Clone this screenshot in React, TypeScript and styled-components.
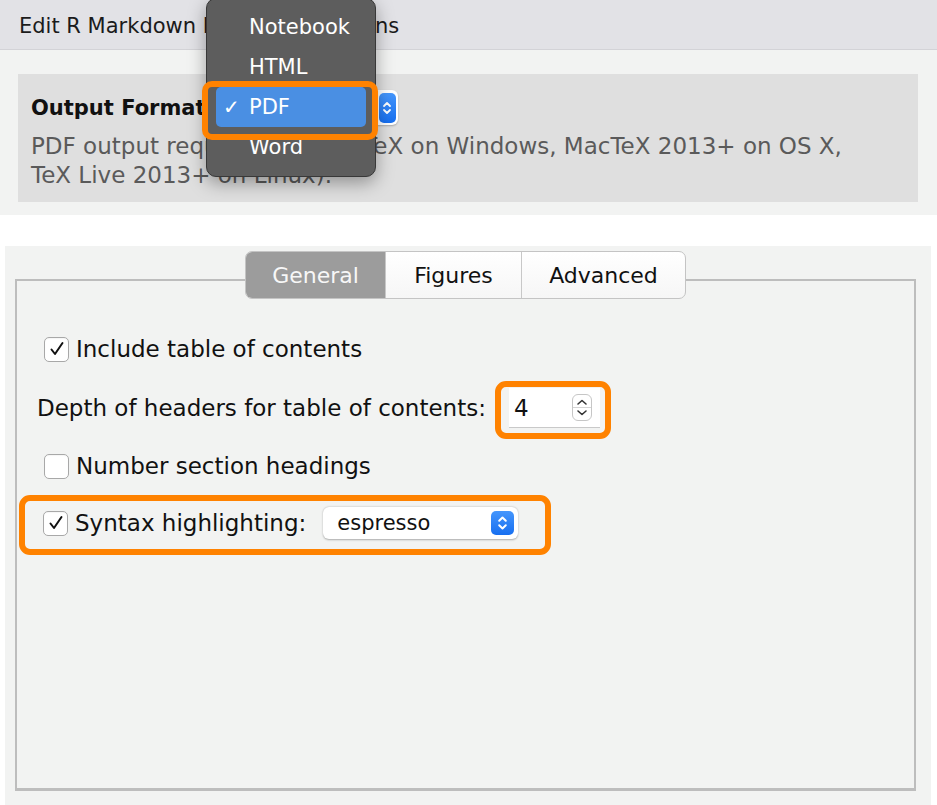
import React from "react";
import styled, { createGlobalStyle } from "styled-components";

const GlobalStyle = createGlobalStyle`
  html, body { margin: 0; padding: 0; background: #ffffff; }
  body { font-family: "DejaVu Sans", "Lucida Grande", sans-serif; }
  * { box-sizing: border-box; }
`;

const ORANGE = "#ff8200";

const Stage = styled.div`
  position: relative;
  width: 937px;
  height: 805px;
  overflow: hidden;
  background: #ffffff;
  display: flex;
  flex-direction: column;
`;

const TitleBar = styled.div`
  height: 50px;
  flex: none;
  display: flex;
  align-items: center;
  padding: 3px 0 0 19px;
  background: #e2e2e6;
  border-bottom: 1px solid #d3d3d7;
  font-size: 21px;
  color: #1b1b1b;
  white-space: nowrap;
`;

const TopSection = styled.div`
  height: 165px;
  flex: none;
  background: #f2f3f2;
  padding: 24px 19px 0 18px;
`;

const OutputBox = styled.div`
  height: 128px;
  background: #dfdfdf;
  padding: 16px 13px 0 13px;
`;

const FormatRow = styled.div`
  display: flex;
  align-items: center;
  height: 35px;
`;

const FormatLabel = styled.span`
  font-size: 21px;
  font-weight: bold;
  color: #111;
`;

const FormatSelect = styled.div`
  margin-left: 12px;
  width: 172px;
  height: 35px;
  flex: none;
  display: flex;
  align-items: center;
  justify-content: space-between;
  padding: 0 2px 0 12px;
  background: #ffffff;
  border-radius: 6px;
  box-shadow: 0 1px 2px rgba(0, 0, 0, 0.25);
  font-size: 21px;
  color: #111;
`;

const Description = styled.div`
  margin-top: 7px;
  font-size: 23px;
  line-height: 29px;
  color: #5a5a5a;
  white-space: nowrap;
`;

const LowerPanel = styled.div`
  flex: 1;
  margin: 31px 6px 0 5px;
  background: #f2f3f2;
  padding: 5px 15px 14px 10px;
  display: flex;
  flex-direction: column;
`;

const TabStrip = styled.div`
  position: relative;
  z-index: 1;
  align-self: center;
  display: flex;
  height: 48px;
  border: 1.5px solid #c4c4c4;
  border-radius: 7px;
  overflow: hidden;
  background: linear-gradient(#ffffff, #f6f6f6);
`;

const Tab = styled.div<{ $active?: boolean; $w: number }>`
  width: ${(p) => p.$w}px;
  display: flex;
  align-items: center;
  justify-content: center;
  font-size: 22px;
  color: ${(p) => (p.$active ? "#f7f7f7" : "#111")};
  background: ${(p) => (p.$active ? "#9c9c9c" : "transparent")};
  & + & {
    border-left: 1.5px solid #c8c8c8;
  }
`;

const Pane = styled.div`
  flex: 1;
  margin-top: -20px;
  border: 2px solid #bdbdbd;
  border-bottom-width: 3px;
  padding: 54px 0 0 0;
  display: flex;
  flex-direction: column;
  align-items: flex-start;
`;

const Row = styled.div<{ $indent: number; $mt?: number }>`
  display: flex;
  align-items: center;
  margin-left: ${(p) => p.$indent}px;
  margin-top: ${(p) => p.$mt ?? 0}px;
`;

const TopRow = styled(Row)`
  align-items: flex-start;
`;

const Box = styled.div`
  width: 25px;
  height: 25px;
  flex: none;
  border: 1px solid #a8a8a8;
  border-radius: 5px;
  background: #ffffff;
  box-shadow: inset 0 1px 1px rgba(0, 0, 0, 0.04);
  display: flex;
  align-items: center;
  justify-content: center;
`;

const Label = styled.span<{ $gap?: number; $mt?: number }>`
  font-size: 23px;
  line-height: 28px;
  color: #111;
  white-space: nowrap;
  margin-left: ${(p) => p.$gap ?? 0}px;
  margin-top: ${(p) => p.$mt ?? 0}px;
`;

const Highlight = styled.div<{ $pad: string; $ml?: number }>`
  display: flex;
  align-items: center;
  margin-left: ${(p) => p.$ml ?? 0}px;
  border: 6px solid ${ORANGE};
  border-radius: 11px;
  padding: ${(p) => p.$pad};
`;

const NumberField = styled.div`
  width: 91px;
  height: 40px;
  display: flex;
  align-items: center;
  padding-left: 5px;
  background: #ffffff;
  border-bottom: 1.5px solid #c9c9c9;
  font-size: 23px;
  color: #111;
`;

const Stepper = styled.div`
  margin-left: auto;
  margin-right: 8px;
  width: 20px;
  height: 27px;
  border: 1px solid #c6c6c6;
  border-radius: 6px;
  background: #ffffff;
  display: flex;
  align-items: center;
  justify-content: center;
`;

const SyntaxSelect = styled.div`
  margin-left: 17px;
  width: 195px;
  height: 32px;
  display: flex;
  align-items: center;
  justify-content: space-between;
  padding: 0 4px 0 14px;
  background: #ffffff;
  border-radius: 6px;
  box-shadow: 0 0.5px 2px rgba(0, 0, 0, 0.3);
  font-size: 21px;
  color: #111;
`;

const BlueStepper = styled.div<{ $w: number; $h: number }>`
  width: ${(p) => p.$w}px;
  height: ${(p) => p.$h}px;
  border-radius: 5px;
  background: linear-gradient(#4596fc, #176ff0);
  display: flex;
  align-items: center;
  justify-content: center;
  flex: none;
`;

const Menu = styled.div`
  position: absolute;
  left: 206px;
  top: -2px;
  width: 170px;
  height: 179px;
  z-index: 10;
  background: #5d5d5d;
  border: 1px solid #383838;
  border-radius: 10px;
  box-shadow: 0 6px 18px rgba(0, 0, 0, 0.35);
  padding: 8px 9px;
  display: flex;
  flex-direction: column;
`;

const MenuItem = styled.div<{ $active?: boolean }>`
  height: 40px;
  flex: none;
  display: flex;
  align-items: center;
  padding-left: 7px;
  border-radius: 5px;
  background: ${(p) => (p.$active ? "#4a8fe3" : "transparent")};
  color: #ffffff;
  font-size: 21px;
`;

const MenuCheck = styled.span`
  width: 26px;
  flex: none;
  font-size: 20px;
`;

const Ring = styled.div`
  position: absolute;
  left: 202px;
  top: 81px;
  width: 176px;
  height: 59px;
  z-index: 11;
  border: 6px solid ${ORANGE};
  border-radius: 10px;
  pointer-events: none;
`;

const Check = () => (
  <svg width="18" height="18" viewBox="0 0 18 18">
    <path d="M3.5 9.5 L7 14 L14.5 3" fill="none" stroke="#111" strokeWidth="2" strokeLinecap="round" strokeLinejoin="round" />
  </svg>
);

const Checkbox = ({ checked }: { checked?: boolean }) => <Box>{checked && <Check />}</Box>;

const UpDown = ({ color, w, h }: { color: string; w: number; h: number }) => (
  <svg width={w} height={h} viewBox="0 0 10 18">
    <path d="M2 7 L5 4 L8 7 M2 11 L5 14 L8 11" fill="none" stroke={color} strokeWidth="1.8" strokeLinecap="round" strokeLinejoin="round" />
  </svg>
);

const SmallUpDown = () => (
  <svg width="18" height="25" viewBox="0 0 18 25">
    <path d="M5 9 L9 5.5 L13 9" fill="none" stroke="#333" strokeWidth="1.6" strokeLinecap="round" strokeLinejoin="round" />
    <line x1="0" y1="12.5" x2="18" y2="12.5" stroke="#d4d4d4" strokeWidth="1" />
    <path d="M5 16 L9 19.5 L13 16" fill="none" stroke="#333" strokeWidth="1.6" strokeLinecap="round" strokeLinejoin="round" />
  </svg>
);

export default function App() {
  return (
    <>
      <GlobalStyle />
      <Stage>
        <TitleBar>Edit R Markdown Document Options</TitleBar>
        <TopSection>
          <OutputBox>
            <FormatRow>
              <FormatLabel>Output Format:</FormatLabel>
              <FormatSelect>
                <span>PDF</span>
                <BlueStepper $w={17} $h={30}>
                  <UpDown color="#fff" w={10} h={18} />
                </BlueStepper>
              </FormatSelect>
            </FormatRow>
            <Description>
              PDF output requires TeX (MiKTeX on Windows, MacTeX 2013+ on OS X,
              <br />
              TeX Live 2013+ on Linux).
            </Description>
          </OutputBox>
        </TopSection>
        <LowerPanel>
          <TabStrip>
            <Tab $active $w={139}>General</Tab>
            <Tab $w={136}>Figures</Tab>
            <Tab $w={164}>Advanced</Tab>
          </TabStrip>
          <Pane>
            <Row $indent={27}>
              <Checkbox checked />
              <Label $gap={7}>Include table of contents</Label>
            </Row>
            <TopRow $indent={20} $mt={18}>
              <Label $mt={13}>Depth of headers for table of contents:</Label>
              <Highlight $pad="1px 5px 5px 8px" $ml={9}>
                <NumberField>
                  4
                  <Stepper>
                    <SmallUpDown />
                  </Stepper>
                </NumberField>
              </Highlight>
            </TopRow>
            <Row $indent={27} $mt={13}>
              <Checkbox />
              <Label $gap={7}>Number section headings</Label>
            </Row>
            <Row $indent={2} $mt={15}>
              <Highlight $pad="6px 27px 10px 18px">
                <Checkbox checked />
                <Label $gap={7}>Syntax highlighting:</Label>
                <SyntaxSelect>
                  <span>espresso</span>
                  <BlueStepper $w={23} $h={24}>
                    <UpDown color="#fff" w={11} h={20} />
                  </BlueStepper>
                </SyntaxSelect>
              </Highlight>
            </Row>
          </Pane>
        </LowerPanel>
        <Menu>
          <MenuItem>
            <MenuCheck />
            Notebook
          </MenuItem>
          <MenuItem>
            <MenuCheck />
            HTML
          </MenuItem>
          <MenuItem $active>
            <MenuCheck>✓</MenuCheck>
            PDF
          </MenuItem>
          <MenuItem>
            <MenuCheck />
            Word
          </MenuItem>
        </Menu>
        <Ring />
      </Stage>
    </>
  );
}
